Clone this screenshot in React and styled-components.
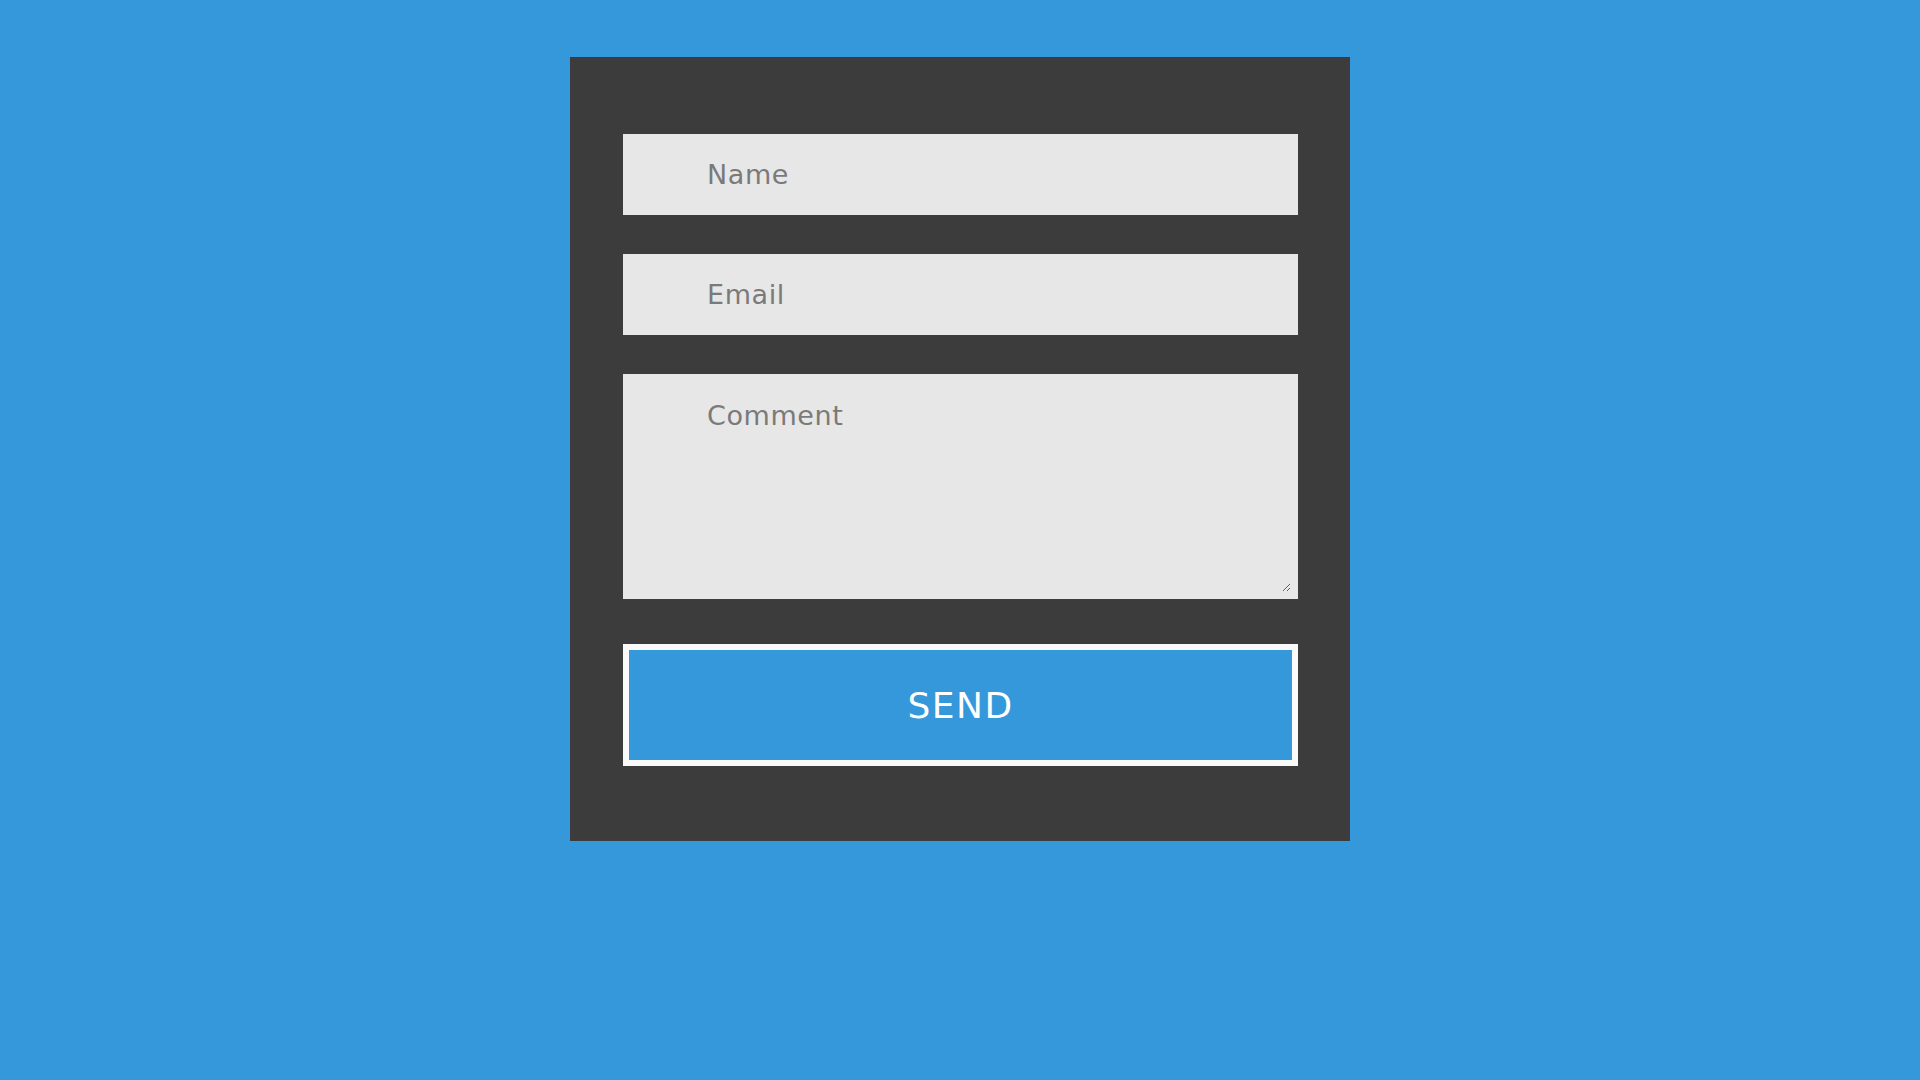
import React from "react";
import styled, { createGlobalStyle } from "styled-components";

const GlobalStyle = createGlobalStyle`
  html, body {
    margin: 0;
    padding: 0;
    background: #3498db;
  }
  * {
    box-sizing: border-box;
  }
`;

function App() {
  return (
    <>
      <GlobalStyle />
      <Page>
        <Card>
          <Field type="text" placeholder="Name" />
          <Field type="email" placeholder="Email" />
          <Comment placeholder="Comment" />
          <SendButton type="button">SEND</SendButton>
        </Card>
      </Page>
    </>
  );
}

export default App;

const Page = styled.div`
  min-height: 1080px;
  display: flex;
  justify-content: center;
  align-items: flex-start;
  padding-top: 57px;
  font-family: "DejaVu Sans", "Noto Sans", sans-serif;
`;

const Card = styled.form`
  width: 780px;
  background: #3c3c3c;
  display: flex;
  flex-direction: column;
  padding: 77px 52px 75px 53px;
`;

const Field = styled.input`
  width: 675px;
  height: 81px;
  border: none;
  outline: none;
  background: #e7e7e7;
  padding: 0 0 0 84px;
  margin-bottom: 39px;
  font-family: inherit;
  font-size: 27px;
  letter-spacing: 0.6px;
  color: #555;

  &::placeholder {
    color: #7a7a7a;
  }
`;

const Comment = styled.textarea`
  width: 675px;
  height: 225px;
  border: 7px solid #e7e7e7;
  outline: none;
  background: #e7e7e7;
  padding: 19px 0 0 77px;
  margin: 0 0 45px;
  font-family: inherit;
  font-size: 27px;
  letter-spacing: 0.6px;
  color: #555;
  display: block;

  &::placeholder {
    color: #7a7a7a;
  }
`;

const SendButton = styled.button`
  width: 675px;
  height: 122px;
  border: 6px solid #fafafa;
  background: #3498db;
  color: #fff;
  font-family: inherit;
  font-size: 36px;
  letter-spacing: 1.5px;
  cursor: pointer;
`;
